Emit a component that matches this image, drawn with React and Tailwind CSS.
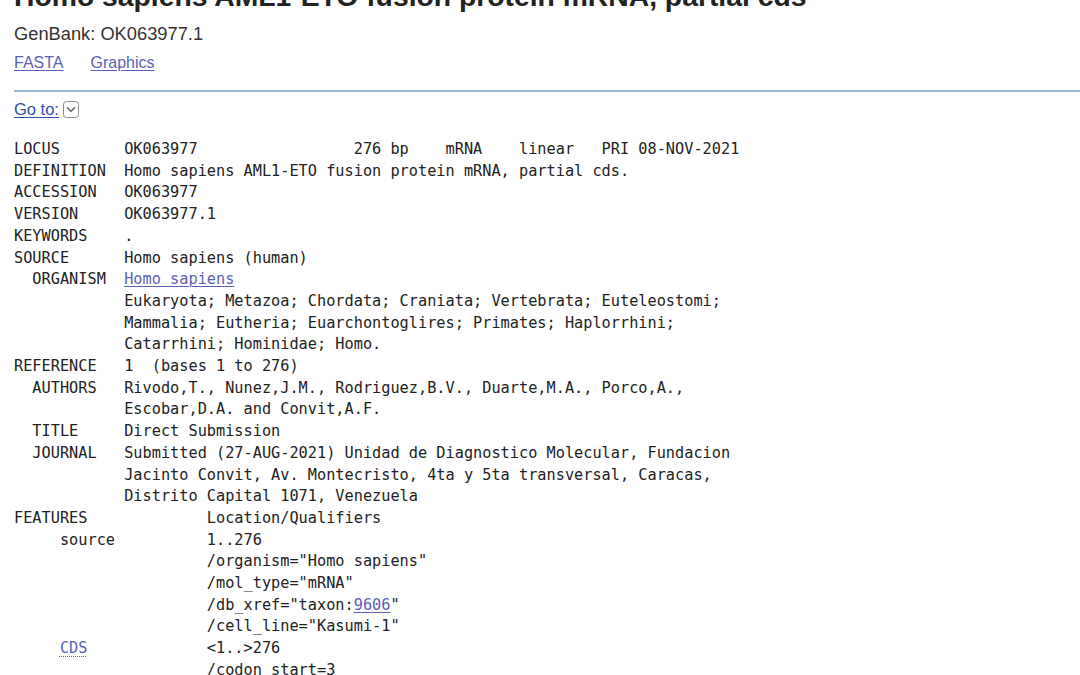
import React from "react";

function GoToIcon() {
  return (
    <svg width="16" height="17" viewBox="0 0 16 17" className="block">
      <rect x="0.5" y="0.5" width="15" height="16" rx="3" ry="3" fill="#fff" stroke="#8a8a8a" strokeWidth="1" />
      <path d="M4.5 6.8 L8 10.3 L11.5 6.8" fill="none" stroke="#6a6a6a" strokeWidth="1.6" strokeLinecap="round" strokeLinejoin="round" />
    </svg>
  );
}

const L = ({ children }) => (
  <span className="text-[#5b5fb8] underline decoration-1 underline-offset-2">{children}</span>
);

export default function App() {
  return (
    <div className="h-[675px] w-[1080px] overflow-hidden bg-white pl-[14px] font-['Liberation_Sans',Arial,sans-serif]">
      <h1 className="mt-[-20px] whitespace-nowrap text-[28.3px] font-bold leading-[32px] text-[#222]">
        Homo sapiens AML1-ETO fusion protein mRNA, partial cds
      </h1>
      <div className="mt-[10px] text-[18.3px] leading-[24px] text-[#333]">GenBank: OK063977.1</div>
      <div className="mt-[7px] flex gap-[27px] text-[16px] leading-[20px]">
        <span className="text-[#5b5fb8] underline underline-offset-2">FASTA</span>
        <span className="text-[#5b5fb8] underline underline-offset-2">Graphics</span>
      </div>
      <div className="mt-[17px] h-[2px] bg-[#9fb4cb]" />
      <div className="mt-[7px] flex items-center gap-[4px] text-[16.5px] leading-[20px]">
        <span className="text-[#2d50b0] underline underline-offset-2">Go to:</span>
        <GoToIcon />
      </div>
      <pre className="mt-[20px] whitespace-pre font-['DejaVu_Sans_Mono',monospace] text-[15.25px] leading-[21.7px] text-[#222]">
{`LOCUS       OK063977                 276 bp    mRNA    linear   PRI 08-NOV-2021
DEFINITION  Homo sapiens AML1-ETO fusion protein mRNA, partial cds.
ACCESSION   OK063977
VERSION     OK063977.1
KEYWORDS    .
SOURCE      Homo sapiens (human)
  ORGANISM  `}<L>Homo sapiens</L>{`
            Eukaryota; Metazoa; Chordata; Craniata; Vertebrata; Euteleostomi;
            Mammalia; Eutheria; Euarchontoglires; Primates; Haplorrhini;
            Catarrhini; Hominidae; Homo.
REFERENCE   1  (bases 1 to 276)
  AUTHORS   Rivodo,T., Nunez,J.M., Rodriguez,B.V., Duarte,M.A., Porco,A.,
            Escobar,D.A. and Convit,A.F.
  TITLE     Direct Submission
  JOURNAL   Submitted (27-AUG-2021) Unidad de Diagnostico Molecular, Fundacion
            Jacinto Convit, Av. Montecristo, 4ta y 5ta transversal, Caracas,
            Distrito Capital 1071, Venezuela
FEATURES             Location/Qualifiers
     source          1..276
                     /organism="Homo sapiens"
                     /mol_type="mRNA"
                     /db_xref="taxon:`}<L>9606</L>{`"
                     /cell_line="Kasumi-1"
     `}<span className="text-[#5b5fb8] underline decoration-dotted decoration-1 underline-offset-[3px]">CDS</span>{`             <1..>276
                     /codon_start=3`}
      </pre>
    </div>
  );
}
